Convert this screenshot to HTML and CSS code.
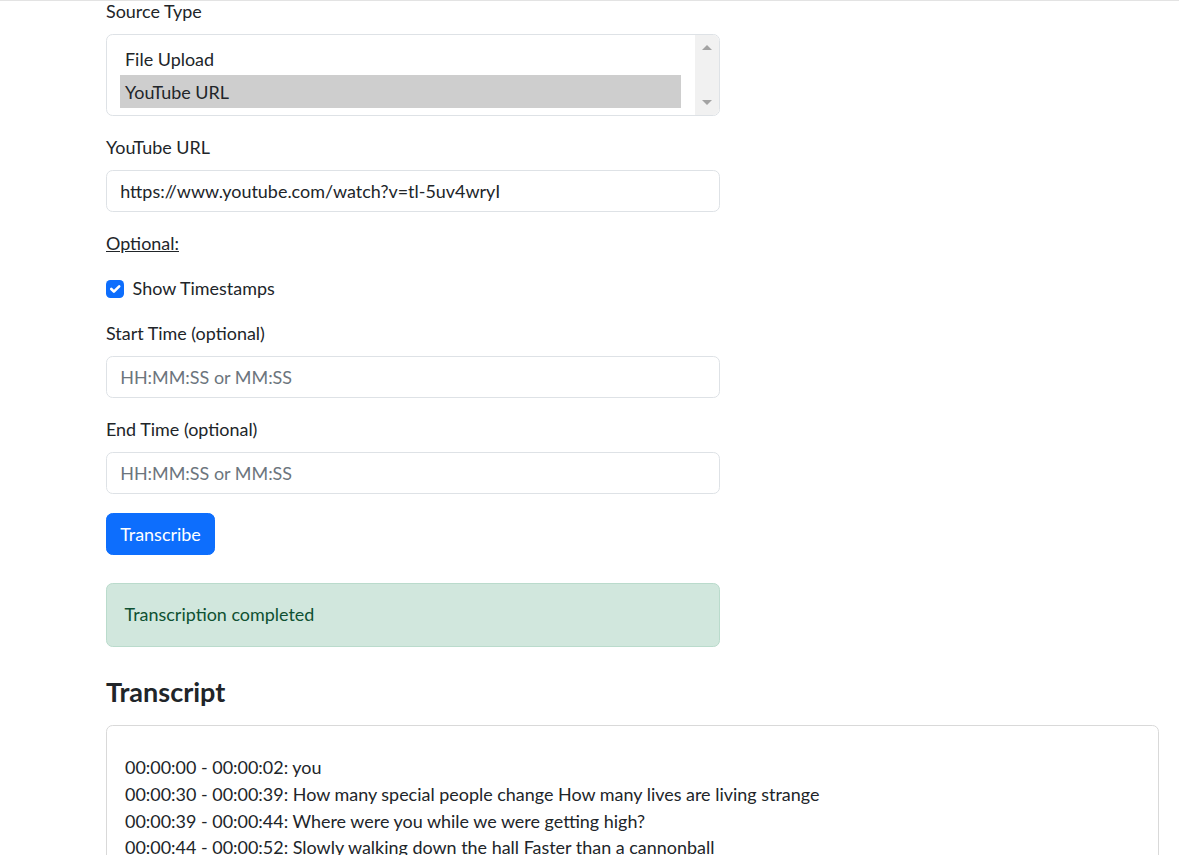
FILE: index.html
```html
<!DOCTYPE html>
<html lang="en">
<head>
<meta charset="utf-8">
<title>Transcriber</title>
<link rel="stylesheet" href="styles.css">
</head>
<body>
<main class="page">
  <form class="form">
    <div class="field">
      <label class="label">Source Type</label>
      <div class="listbox" role="listbox">
        <div class="options">
          <div class="option" role="option">File Upload</div>
          <div class="option selected" role="option" aria-selected="true">YouTube URL</div>
        </div>
        <div class="scrollbar">
          <span class="arrow up"></span>
          <span class="arrow down"></span>
        </div>
      </div>
    </div>

    <div class="field">
      <label class="label" for="url">YouTube URL</label>
      <input class="input" id="url" type="text" value="https://www.youtube.com/watch?v=tl-5uv4wryI">
    </div>

    <p class="optional">Optional:</p>

    <div class="check-row">
      <span class="checkbox">
        <svg viewBox="0 0 20 20" width="18" height="18"><path d="M6 10l3 3 6-6" fill="none" stroke="#fff" stroke-width="3" stroke-linecap="round" stroke-linejoin="round"/></svg>
      </span>
      <span class="check-label">Show Timestamps</span>
    </div>

    <div class="field">
      <label class="label" for="start">Start Time (optional)</label>
      <input class="input" id="start" type="text" placeholder="HH:MM:SS or MM:SS">
    </div>

    <div class="field">
      <label class="label" for="end">End Time (optional)</label>
      <input class="input" id="end" type="text" placeholder="HH:MM:SS or MM:SS">
    </div>

    <button class="btn" type="button">Transcribe</button>

    <div class="alert">Transcription completed</div>
  </form>

  <h4 class="heading">Transcript</h4>
  <div class="transcript">
    <div class="line">00:00:00 - 00:00:02: you</div>
    <div class="line">00:00:30 - 00:00:39: How many special people change How many lives are living strange</div>
    <div class="line">00:00:39 - 00:00:44: Where were you while we were getting high?</div>
    <div class="line">00:00:44 - 00:00:52: Slowly walking down the hall Faster than a cannonball</div>
    <div class="line">00:00:52 - 00:00:59: Where were you while we were getting high?</div>
  </div>
</main>
</body>
</html>
```

FILE: styles.css
```css
* { box-sizing: border-box; }

html, body {
  margin: 0;
  padding: 0;
}

body {
  font-family: "Lato", "Liberation Sans", sans-serif;
  font-size: 17.95px;
  line-height: 26.4px;
  color: #212529;
  background: #fff;
  border-top: 1px solid #e3e3e3;
  overflow: hidden;
}

.page {
  padding: 0 20px 0 106px;
  margin-top: -2px;
}

.form {
  width: 614px;
}

.field {
  margin-bottom: 18.9px;
}

.label {
  display: block;
  margin-bottom: 8.8px;
  line-height: 25.4px;
  padding-bottom: 1px;
}

.listbox {
  display: flex;
  height: 81.6px;
  border: 1px solid #dee2e6;
  border-radius: 6.6px;
  overflow: hidden;
  background: #fff;
}

.options {
  flex: 1;
  padding: 6.8px 14px 6.8px 13px;
}

.option {
  height: 33px;
  line-height: 34px;
  padding-left: 5px;
}

.option.selected {
  background: #cecece;
}

.scrollbar {
  width: 24px;
  background: #f1f1f1;
  display: flex;
  flex-direction: column;
  justify-content: space-between;
  align-items: center;
  padding: 10px 0 10px;
}

.arrow {
  width: 0;
  height: 0;
  border-left: 5px solid transparent;
  border-right: 5px solid transparent;
}

.arrow.up { border-bottom: 5px solid #a3a3a3; }
.arrow.down { border-top: 5px solid #a3a3a3; }

.input {
  display: block;
  width: 100%;
  height: 41.8px;
  padding: 6.6px 13.2px;
  font: inherit;
  color: #212529;
  border: 1px solid #dee2e6;
  border-radius: 6.6px;
  background: #fff;
  outline: none;
}

.input::placeholder {
  color: #6c757d;
  opacity: 1;
}

.optional {
  margin: 0 0 18.9px;
  line-height: 25.4px;
  padding-bottom: 1px;
  text-decoration: underline;
}

.check-row {
  display: flex;
  align-items: center;
  gap: 9px;
  margin-bottom: 18.9px;
}

.check-label {
  line-height: 25.4px;
  padding-bottom: 1px;
}

.checkbox {
  width: 17.6px;
  height: 17.6px;
  border-radius: 4.4px;
  background: #0d6efd;
  display: flex;
  align-items: center;
  justify-content: center;
}

.btn {
  display: block;
  height: 41.8px;
  padding: 6.6px 13.2px;
  font: inherit;
  color: #fff;
  background: #0d6efd;
  border: 1px solid #0d6efd;
  border-radius: 6.6px;
}

.alert {
  margin-top: 28px;
  padding: 17.6px;
  height: 64.5px;
  line-height: 26.4px;
  color: #0f5132;
  background: #d1e7dd;
  border: 1px solid #badbcc;
  border-radius: 6.6px;
}

.heading {
  margin: 29px 0 0;
  font-size: 27px;
  line-height: 31.7px;
  font-weight: 700;
}

.transcript {
  margin-top: 17.5px;
  width: 1053px;
  padding: 27.8px 18px 17.6px;
  border: 1px solid #d9d9d9;
  border-radius: 6.6px;
}

.line {
  line-height: 26.7px;
}
```
